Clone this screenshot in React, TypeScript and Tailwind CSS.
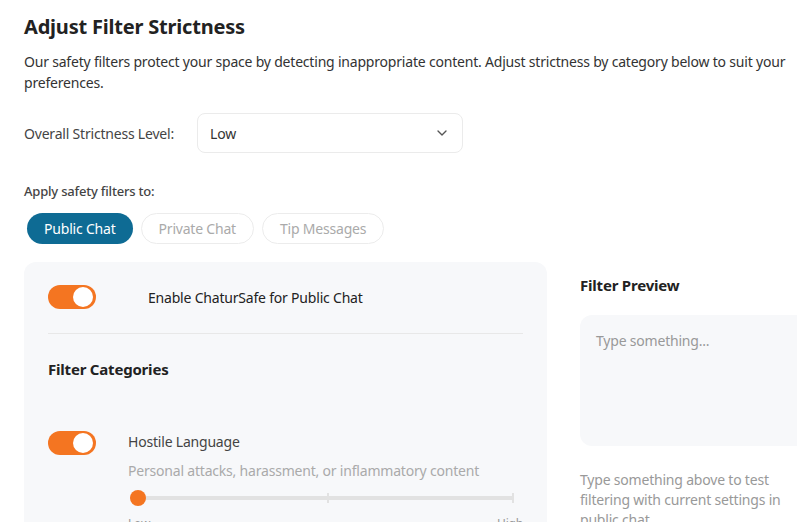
import { ChevronDown } from "lucide-react";

function Toggle() {
  return (
    <div className="relative h-[24px] w-[48px] shrink-0 rounded-full bg-[#f47521]">
      <div className="absolute right-[3px] top-[2px] h-[20px] w-[20px] rounded-full bg-white" />
    </div>
  );
}

export default function App() {
  return (
    <div
      className="h-[522px] w-[797px] overflow-hidden bg-white tracking-[-0.2px]"
      style={{ fontFamily: '"Noto Sans", sans-serif' }}
    >
      <div className="w-[820px] pl-6 pt-[13px]">
        <h1 className="text-[20px] font-bold leading-[28px] text-[#222]">Adjust Filter Strictness</h1>
        <p className="mt-[10px] w-[775px] text-[14px] leading-[21px] text-[#333]">
          Our safety filters protect your space by detecting inappropriate content. Adjust strictness by category below to suit your preferences.
        </p>

        <div className="mt-[20px] flex items-center">
          <span className="w-[173px] text-[14px] text-[#444]">Overall Strictness Level:</span>
          <div className="flex h-[40px] w-[266px] items-center justify-between rounded-lg border border-[#ebebeb] bg-white pl-[12px] pr-[12px]">
            <span className="text-[14px] text-[#333]">Low</span>
            <ChevronDown className="h-4 w-4 text-[#555]" strokeWidth={2} />
          </div>
        </div>

        <div className="mt-[28px] text-[13px] font-medium leading-[20px] text-[#444]">Apply safety filters to:</div>
        <div className="ml-[3px] mt-[12px] flex gap-2">
          <button className="h-[31px] rounded-full bg-[#0e6b94] px-[17px] text-[14px] text-white">Public Chat</button>
          <button className="h-[31px] rounded-full border border-[#ececec] px-[17px] text-[14px] text-[#aaa]">Private Chat</button>
          <button className="h-[31px] rounded-full border border-[#ececec] px-[17px] text-[14px] text-[#aaa]">Tip Messages</button>
        </div>

        <div className="mt-[18px] flex items-start gap-[33px]">
          <div className="w-[523px] shrink-0 rounded-xl bg-[#f7f8fa] px-6 pt-[23px] pb-10">
            <div className="flex items-center">
              <Toggle />
              <span className="ml-[52px] text-[14px] text-[#222]">Enable ChaturSafe for Public Chat</span>
            </div>
            <div className="mt-[24px] h-px bg-[#e8e8e8]" />
            <h2 className="mt-[24px] text-[15px] font-bold leading-[22px] text-[#222]">Filter Categories</h2>
            <div className="mt-[51px] flex">
              <Toggle />
              <div className="ml-[32px] flex-1">
                <div className="text-[14px] leading-[22px] text-[#444]">Hostile Language</div>
                <div className="mt-[7px] text-[14px] leading-[22px] text-[#aaa]">Personal attacks, harassment, or inflammatory content</div>
                <div className="relative mt-[8px] h-[16px]">
                  <div className="absolute left-[2px] right-[9px] top-[6px] h-[4px] rounded-full bg-[#e2e2e2]" />
                  <div className="absolute left-[199px] top-[3px] h-[10px] w-[2px] bg-[#e2e2e2]" />
                  <div className="absolute right-[9px] top-[3px] h-[10px] w-[2px] bg-[#e2e2e2]" />
                  <div className="absolute left-[2px] top-0 h-[16px] w-[16px] rounded-full bg-[#f47521]" />
                </div>
                <div className="mt-[9px] flex justify-between text-[12px] text-[#999]">
                  <span>Low</span>
                  <span>High</span>
                </div>
              </div>
            </div>
          </div>

          <div className="w-[240px] shrink-0">
            <h2 className="mt-[12px] text-[15px] font-bold leading-[22px] text-[#222]">Filter Preview</h2>
            <div className="mt-[19px] h-[131px] rounded-xl bg-[#f7f8fa] px-4 pt-[16px] text-[14px] leading-[20px] text-[#999]">
              Type something...
            </div>
            <p className="mt-[24px] text-[14px] leading-[20px] text-[#999]">
              Type something above to test
              <br />
              filtering with current settings in
              <br />
              public chat.
            </p>
          </div>
        </div>
      </div>
    </div>
  );
}
